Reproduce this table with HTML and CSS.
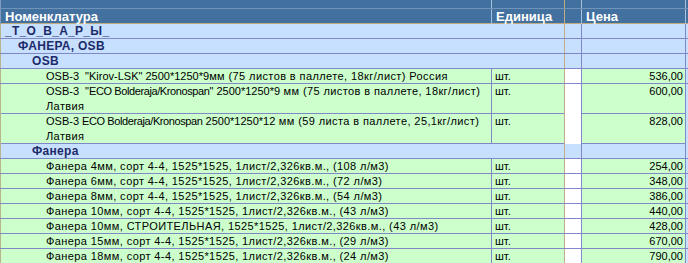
FILE: index.html
```html
<!DOCTYPE html>
<html lang="ru">
<head>
<meta charset="utf-8">
<title>Прайс</title>
<link rel="stylesheet" href="styles.css">
</head>
<body>
<div class="sheet">
  <div class="row band">
    <div class="c c-name"></div><div class="c c-unit"></div><div class="c c-gap"></div><div class="c c-price"></div><div class="c c-tail"></div>
  </div>
  <div class="row head">
    <div class="c c-name">Номенклатура</div><div class="c c-unit">Единица</div><div class="c c-gap"></div><div class="c c-price">Цена</div><div class="c c-tail"></div>
  </div>

  <div class="row group">
    <div class="c c-span l0">_Т_О_В_А_Р_Ы_</div><div class="c c-gap"></div><div class="c c-price"></div><div class="c c-tail"></div>
  </div>
  <div class="row group">
    <div class="c c-span l1">ФАНЕРА, OSB</div><div class="c c-gap"></div><div class="c c-price"></div><div class="c c-tail"></div>
  </div>
  <div class="row group">
    <div class="c c-span l2">OSB</div><div class="c c-gap"></div><div class="c c-price"></div><div class="c c-tail"></div>
  </div>

  <div class="row item">
    <div class="c c-name l3"><span class="brand">OSB-3&nbsp; "Kirov-LSK" 2500*1250*9</span>мм (75 листов в паллете, 18кг/лист) Россия</div><div class="c c-unit">шт.</div><div class="c c-gap"></div><div class="c c-price">536,00</div><div class="c c-tail"></div>
  </div>
  <div class="row item tall">
    <div class="c c-name l3"><span class="brand">OSB-3&nbsp; "<span class="maker">ECO Bolderaja/Kronospan</span>" 2500*1250*9</span> мм (75 листов в паллете, 18кг/лист)<br>Латвия</div><div class="c c-unit">шт.</div><div class="c c-gap"></div><div class="c c-price">600,00</div><div class="c c-tail"></div>
  </div>
  <div class="row item tall">
    <div class="c c-name l3"><span class="brand">OSB-3 <span class="maker">ECO Bolderaja/Kronospan</span> 2500*1250*12</span> мм (59 листа в паллете, 25,1кг/лист)<br>Латвия</div><div class="c c-unit">шт.</div><div class="c c-gap"></div><div class="c c-price">828,00</div><div class="c c-tail"></div>
  </div>

  <div class="row group">
    <div class="c c-span l2">Фанера</div><div class="c c-gap"></div><div class="c c-price"></div><div class="c c-tail"></div>
  </div>

  <div class="row item">
    <div class="c c-name l3">Фанера 4мм, сорт 4-4, 1525*1525, 1лист/2,326кв.м., (108 л/м3)</div><div class="c c-unit">шт.</div><div class="c c-gap"></div><div class="c c-price">254,00</div><div class="c c-tail"></div>
  </div>
  <div class="row item">
    <div class="c c-name l3">Фанера 6мм, сорт 4-4, 1525*1525, 1лист/2,326кв.м., (72 л/м3)</div><div class="c c-unit">шт.</div><div class="c c-gap"></div><div class="c c-price">348,00</div><div class="c c-tail"></div>
  </div>
  <div class="row item">
    <div class="c c-name l3">Фанера 8мм, сорт 4-4, 1525*1525, 1лист/2,326кв.м., (54 л/м3)</div><div class="c c-unit">шт.</div><div class="c c-gap"></div><div class="c c-price">386,00</div><div class="c c-tail"></div>
  </div>
  <div class="row item">
    <div class="c c-name l3">Фанера 10мм, сорт 4-4, 1525*1525, 1лист/2,326кв.м., (43 л/м3)</div><div class="c c-unit">шт.</div><div class="c c-gap"></div><div class="c c-price">440,00</div><div class="c c-tail"></div>
  </div>
  <div class="row item">
    <div class="c c-name l3">Фанера 10мм, СТРОИТЕЛЬНАЯ, 1525*1525, 1лист/2,326кв.м., (43 л/м3)</div><div class="c c-unit">шт.</div><div class="c c-gap"></div><div class="c c-price">428,00</div><div class="c c-tail"></div>
  </div>
  <div class="row item">
    <div class="c c-name l3">Фанера 15мм, сорт 4-4, 1525*1525, 1лист/2,326кв.м., (29 л/м3)</div><div class="c c-unit">шт.</div><div class="c c-gap"></div><div class="c c-price">670,00</div><div class="c c-tail"></div>
  </div>
  <div class="row item">
    <div class="c c-name l3">Фанера 18мм, сорт 4-4, 1525*1525, 1лист/2,326кв.м., (24 л/м3)</div><div class="c c-unit">шт.</div><div class="c c-gap"></div><div class="c c-price">790,00</div><div class="c c-tail"></div>
  </div>
</div>
</body>
</html>
```

FILE: styles.css
```css
* { box-sizing: border-box; }

html, body {
  margin: 0;
  padding: 0;
  background: #ffffff;
}

.sheet {
  width: 688px;
  font-family: "Liberation Sans", Arial, sans-serif;
  font-size: 11px;
  color: #000000;
  overflow: hidden;
}

.row {
  display: grid;
  grid-template-columns: 492px 73px 17px 104px 2px;
  height: 15px;
  border-bottom: 1px solid #8088c8;
  line-height: 14px;
}

.row.tall {
  height: 30px;
  line-height: 15px;
}

.c {
  white-space: nowrap;
  overflow: visible;
  border-right: 1px solid #8088c8;
}

.c-name,
.c-span {
  border-left: 1px solid #b8b48c;
}

.c-span {
  grid-column: 1 / 3;
}

.c-unit {
  border-right-color: #c0ae88;
  padding-left: 3px;
}

.c-tail {
  border-right: 0;
}

.c-price {
  text-align: right;
  padding-right: 2px;
}

/* header */
.band {
  height: 9px;
  background: #42709f;
  border-bottom-color: #7093ba;
}

.head {
  background: #42709f;
  border-bottom-color: #c0ab80;
  color: #ffffff;
  font-weight: bold;
  font-size: 13px;
  line-height: 15px;
}

.band .c,
.head .c {
  border-right-color: #a9c0dd;
  padding-left: 4px;
}

.band .c-name,
.head .c-name {
  border-left-color: #7f9cc0;
}

.band .c-unit,
.head .c-unit {
  border-right-color: #c0ab80;
}

.head .c-price {
  text-align: left;
}

/* groups */
.group {
  background: #c8e0ff;
  color: #1c2a6a;
  font-weight: bold;
  font-size: 12px;
  letter-spacing: 0.3px;
}

.group .c-span {
  border-right-color: #c0ae88;
}

/* items */
.item {
  background: #ccffcc;
}

.item .c-name {
  letter-spacing: 0.4px;
}

.item .c-name .brand {
  letter-spacing: 0;
}

.item .c-name .maker {
  letter-spacing: -0.4px;
}

.item .c-gap {
  background: #ffffff;
}

.item .c-tail {
  background: #c8e0ff;
}

.l0 { padding-left: 4px; }
.l1 { padding-left: 17px; }
.l2 { padding-left: 31px; }
.l3 { padding-left: 45px; }
```
